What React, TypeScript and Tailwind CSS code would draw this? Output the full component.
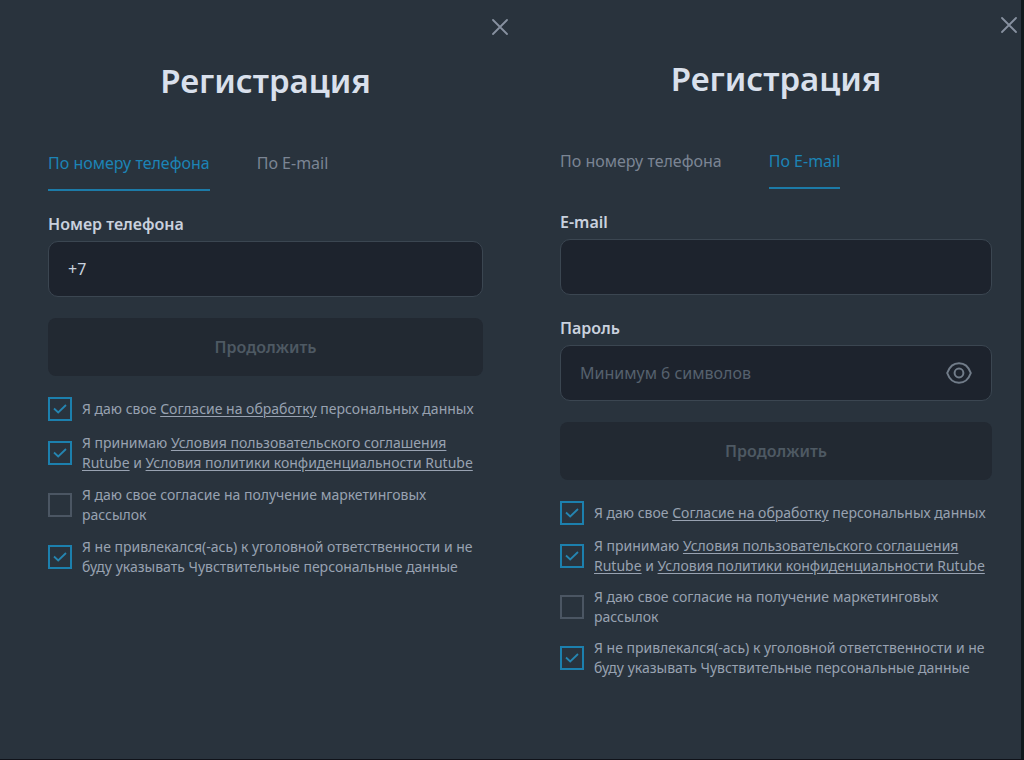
import { useId, useState, type ReactNode } from 'react'
import clsx from 'clsx'

type Mode = 'phone' | 'email'

function CloseIcon() {
  return (
    <svg viewBox="0 0 16 16" className="size-4" fill="none" stroke="currentColor" strokeWidth="1.8" strokeLinecap="round" aria-hidden="true">
      <path d="M1 1l14 14M15 1L1 15" />
    </svg>
  )
}

function EyeIcon() {
  return (
    <svg viewBox="0 0 26 22" className="h-[22px] w-[26px]" fill="none" stroke="currentColor" strokeWidth="2" aria-hidden="true">
      <path d="M1.200 11C3.500 4.500 8 1.200 13 1.200S22.500 4.500 24.800 11C22.500 17.500 18 20.800 13 20.800S3.500 17.500 1.200 11Z" strokeLinejoin="round" />
      <circle cx="13" cy="11" r="4.400" />
    </svg>
  )
}

function Terms({ children }: { children: ReactNode }) {
  return (
    <a href="#" className="underline decoration-1 underline-offset-2">
      {children}
    </a>
  )
}

function Consent({ checked = false, children }: { checked?: boolean; children: ReactNode }) {
  const id = useId()
  return (
    <li className="flex items-center gap-[10px]">
      <span className="grid shrink-0">
        <input
          id={id}
          type="checkbox"
          defaultChecked={checked}
          className="peer col-start-1 row-start-1 size-6 appearance-none border-2 border-[#4b5663] checked:border-[#1c80ae]"
        />
        <svg
          viewBox="0 0 24 24"
          className="pointer-events-none invisible col-start-1 row-start-1 size-6 text-[#2585b1] peer-checked:visible"
          fill="none"
          stroke="currentColor"
          strokeWidth="1.8"
          aria-hidden="true"
        >
          <path d="M6 11.500l4.200 4L18 8" />
        </svg>
      </span>
      <label htmlFor={id}>{children}</label>
    </li>
  )
}

function TextField({
  label,
  type,
  value,
  placeholder,
  action,
}: {
  label: string
  type: string
  value?: string
  placeholder?: string
  action?: ReactNode
}) {
  const id = useId()
  return (
    <div className="flex flex-col gap-[5px]">
      <label htmlFor={id} className="text-base leading-6 font-semibold text-[#c9d1de]">
        {label}
      </label>
      <div className="flex h-14 items-center rounded-[10px] border border-[#3b4651] bg-[#1d232d] px-[19px]">
        <input
          id={id}
          type={type}
          defaultValue={value}
          placeholder={placeholder}
          className="min-w-0 flex-1 bg-transparent text-base text-[#c9d1de] outline-none placeholder:text-[#56616e]"
        />
        {action}
      </div>
    </div>
  )
}

function RegistrationPanel({ initialMode, className }: { initialMode: Mode; className: string }) {
  const [mode, setMode] = useState<Mode>(initialMode)
  const tabs: { key: Mode; label: string }[] = [
    { key: 'phone', label: 'По номеру телефона' },
    { key: 'email', label: 'По E-mail' },
  ]
  return (
    <section className={className}>
      <div className="flex justify-end pr-1">
        <button type="button" aria-label="Закрыть" className="text-[#8791a0]">
          <CloseIcon />
        </button>
      </div>
      <form className="pr-[29px] pl-12" onSubmit={(e) => e.preventDefault()}>
        <h1 className="mt-[26px] text-center text-[33px] leading-10 font-semibold text-[#d9e0ec]">Регистрация</h1>
        <div role="tablist" className="mt-[50px] flex gap-[47px]">
          {tabs.map((tab) => (
            <button
              key={tab.key}
              type="button"
              role="tab"
              aria-selected={mode === tab.key}
              onClick={() => setMode(tab.key)}
              className={clsx(
                'border-b-2 pb-[14px] text-base leading-6',
                mode === tab.key ? 'border-[#1c7ba8] text-[#1c84b6]' : 'border-transparent text-[#7b8594]',
              )}
            >
              {tab.label}
            </button>
          ))}
        </div>
        <div className="mt-[21px] flex flex-col gap-[21px]">
          {mode === 'phone' ? (
            <TextField label="Номер телефона" type="tel" value="+7" />
          ) : (
            <>
              <TextField label="E-mail" type="email" />
              <TextField
                label="Пароль"
                type="password"
                placeholder="Минимум 6 символов"
                action={
                  <button type="button" aria-label="Показать пароль" className="text-[#717c89]">
                    <EyeIcon />
                  </button>
                }
              />
            </>
          )}
          <button type="submit" disabled className="h-[58px] rounded-lg bg-[#222932] text-base font-semibold text-[#4e5963]">
            Продолжить
          </button>
          <ul className={clsx('flex flex-col text-sm leading-5 text-[#98a2b1]', mode === 'phone' ? 'gap-3' : 'gap-[11px]')}>
            <Consent checked>
              Я даю свое <Terms>Согласие на обработку</Terms> персональных данных
            </Consent>
            <Consent checked>
              Я принимаю <Terms>Условия пользовательского соглашения Rutube</Terms> и{' '}
              <Terms>Условия политики конфиденциальности Rutube</Terms>
            </Consent>
            <Consent>Я даю свое согласие на получение маркетинговых рассылок</Consent>
            <Consent checked>
              Я не привлекался(-ась) к уголовной ответственности и не буду указывать Чувствительные персональные данные
            </Consent>
          </ul>
        </div>
      </form>
    </section>
  )
}

export default function App() {
  return (
    <main className="grid min-h-screen grid-cols-2 border-b border-[#10131a] bg-[#29333d] font-['Noto_Sans','Open_Sans',sans-serif]">
      <RegistrationPanel initialMode="phone" className="pt-[19px]" />
      <RegistrationPanel initialMode="email" className="border-r-3 border-[#101a1d] pt-[17px]" />
    </main>
  )
}
